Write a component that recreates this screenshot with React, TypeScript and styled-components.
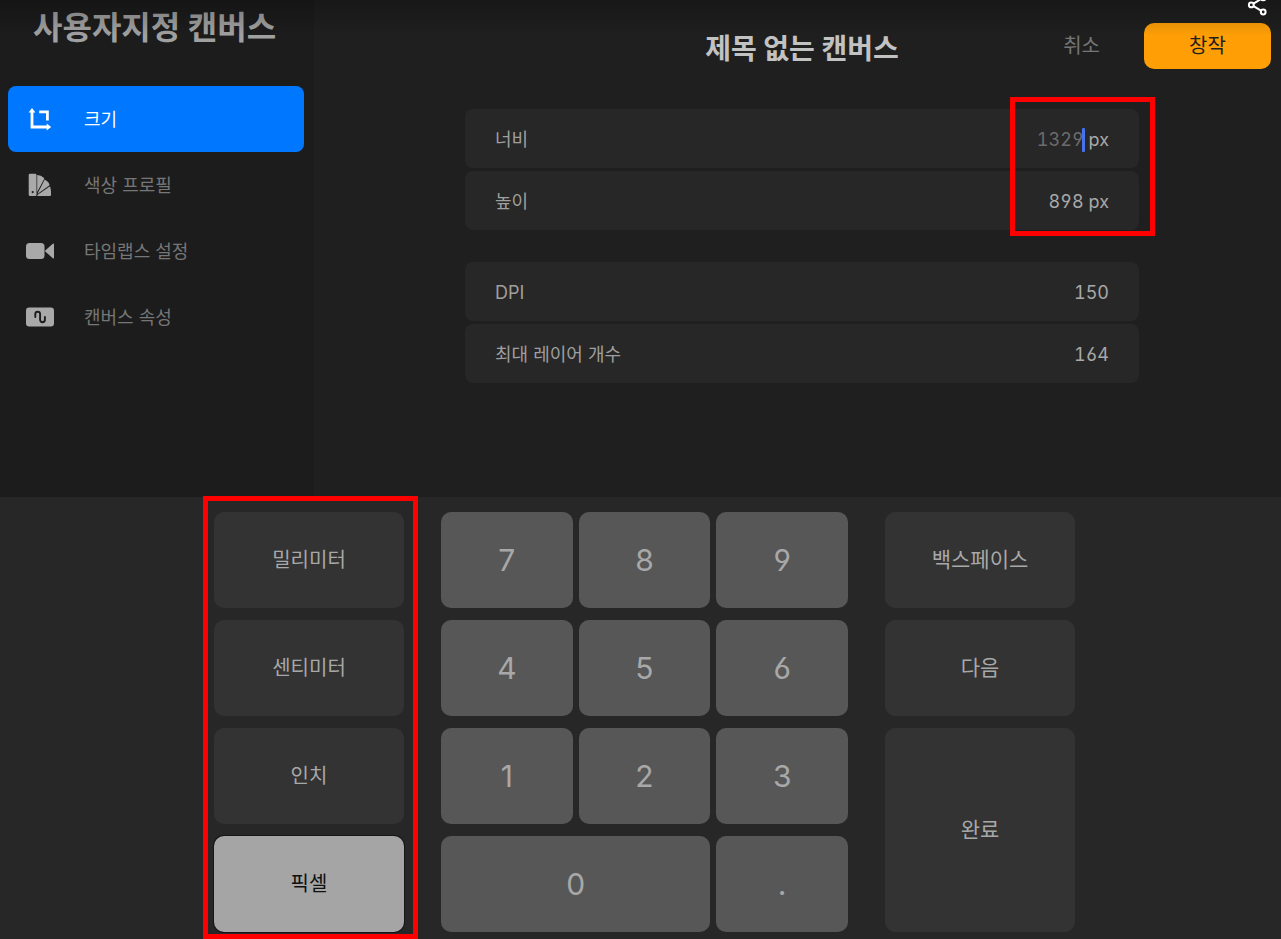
import React, { useState } from "react";
import styled, { createGlobalStyle, css } from "styled-components";

const GlobalStyle = createGlobalStyle`
  *, *::before, *::after { box-sizing: border-box; }
  body {
    margin: 0;
    background: #272727;
    color: #a3a3a3;
    font-family: Inter, "Noto Sans CJK KR", sans-serif;
    font-size: 18px;
    line-height: 24px;
  }
  button, input { font: inherit; color: inherit; border: 0; margin: 0; padding: 0; background: none; }
  button { cursor: pointer; }
  h1, h2, ul { margin: 0; padding: 0; }
  ul { list-style: none; }
`;

const Page = styled.div`
  position: relative;
  display: flex;
  flex-direction: column;
  min-height: 100vh;
  overflow: hidden;
`;

const TopShade = styled.div`
  position: absolute;
  inset: 0 0 auto;
  height: 36px;
  background: linear-gradient(rgba(0, 0, 0, 0.25), rgba(0, 0, 0, 0));
  pointer-events: none;
`;

const Settings = styled.div`
  display: grid;
  grid-template-columns: 314px 1fr;
  min-height: 497px;
`;

const Sidebar = styled.aside`
  padding: 8px 10px 0 8px;
  background: #1c1c1c;
`;

const SidebarTitle = styled.h1`
  padding: 0 0 0 25px;
  margin-bottom: 38px;
  color: #a0a0a0;
  font-size: 32px;
  line-height: 40px;
  font-weight: 700;
`;

const NavItem = styled.button<{ $active: boolean }>`
  display: flex;
  align-items: center;
  gap: 30px;
  width: 100%;
  height: 66px;
  padding: 0 18px;
  border-radius: 8px;
  text-align: left;
  color: #767676;
  svg { color: #a9a9a9; flex: none; }
  ${(p) =>
    p.$active &&
    css`
      background: #0077ff;
      color: #fff;
      svg { color: #fff; }
    `}
`;

const NavLabel = styled.span`
  padding-top: 2px;
`;

const Main = styled.main`
  position: relative;
  padding: 23px 10px 0 19px;
  background: #1f1f1f;
`;

const Header = styled.header`
  display: grid;
  grid-template-columns: 1fr auto 1fr;
  align-items: center;
  margin-bottom: 40px;
`;

const CanvasTitle = styled.h2`
  grid-column: 2;
  padding-top: 6px;
  color: #c2c2c2;
  font-size: 28px;
  line-height: 40px;
  font-weight: 700;
`;

const Actions = styled.div`
  display: flex;
  justify-content: flex-end;
  align-items: center;
  gap: 44px;
`;

const CancelButton = styled.button`
  color: #767676;
  font-size: 20px;
`;

const CreateButton = styled.button`
  width: 127px;
  height: 46px;
  border-radius: 10px;
  background: #ff9f05;
  color: #1f1f1f;
  font-size: 20px;
`;

const ShareButton = styled.button`
  position: absolute;
  top: -6px;
  right: 12px;
  width: 22px;
  height: 22px;
  color: #fff;
  svg { display: block; }
`;

const Form = styled.form`
  display: flex;
  flex-direction: column;
  gap: 32px;
  max-width: 674px;
  margin: 0 auto;
`;

const FieldGroup = styled.div`
  position: relative;
  display: flex;
  flex-direction: column;
  gap: 3px;
`;

const Field = styled.div`
  display: flex;
  align-items: center;
  height: 59px;
  padding: 2px 30px 0;
  border-radius: 8px;
  background: #272727;
`;

const FieldLabel = styled.label`
  flex: 1;
  color: #9f9f9f;
`;

const FieldInput = styled.input<{ $dim?: boolean }>`
  width: 80px;
  text-align: right;
  outline: 0;
  font-feature-settings: "tnum", "cv03", "cv04";
  color: ${(p) => (p.$dim ? "#6c6c6c" : "#a8a8a8")};
`;

const Unit = styled.span`
  padding-left: 5px;
  color: #a8a8a8;
`;

const InputWrap = styled.span`
  position: relative;
  display: flex;
`;

const Caret = styled.span`
  position: absolute;
  top: 0;
  right: -1px;
  width: 3px;
  height: 24px;
  border-radius: 1px;
  background: #4672f0;
`;

const Marker = styled.div`
  position: absolute;
  border: 5px solid #fe0000;
  pointer-events: none;
`;

const FieldMarker = styled(Marker)`
  inset: -12px -16px -6px auto;
  width: 145px;
`;

const UnitMarker = styled(Marker)`
  inset: -16px -14px -7px -11px;
`;

const Keypad = styled.section`
  flex: 1;
  display: grid;
  grid-template-columns: 190px 407px 190px;
  justify-content: center;
  column-gap: 37px;
  padding: 15px 0 7px 8px;
  min-height: 442px;
`;

const KeyColumn = styled.div<{ $columns?: number }>`
  position: relative;
  display: grid;
  grid-template-columns: repeat(${(p) => p.$columns ?? 1}, 1fr);
  grid-template-rows: repeat(4, 1fr);
  gap: 12px 6px;
`;

const Key = styled.button<{ $tall?: boolean }>`
  border-radius: 10px;
  background: #333;
  color: #a8a8a8;
  font-size: 21px;
  ${(p) => p.$tall && "grid-row: span 2;"}
`;

const DigitKey = styled(Key)<{ $wide?: boolean }>`
  background: #575757;
  font-size: 30px;
  font-feature-settings: "cv03", "cv04";
  ${(p) => p.$wide && "grid-column: span 2;"}
`;

const UnitKey = styled(Key)`
  font-size: 20px;
  &[aria-pressed="true"] {
    background: #a5a5a5;
    color: #111;
    box-shadow: 0 0 0 1px #161616;
  }
`;

const SizeIcon = () => (
  <svg width="28" height="28" viewBox="0 0 28 28" fill="none" stroke="currentColor" strokeWidth="2.8" aria-hidden="true">
    <path d="M6 6v16h16M13.2 6.8h8.2v8.6" />
    <path d="M6 3 9.4 7.4H2.6zM25.2 22l-4.5 3.4v-6.8z" fill="currentColor" stroke="none" />
  </svg>
);

const SwatchIcon = () => (
  <svg width="28" height="28" viewBox="0 0 28 28" fill="currentColor" aria-hidden="true">
    <path
      fillRule="evenodd"
      d="M4 2.7h5.2a1.3 1.3 0 0 1 1.3 1.3v19.7a1.3 1.3 0 0 1-1.3 1.3H4a1.3 1.3 0 0 1-1.3-1.3V4A1.3 1.3 0 0 1 4 2.7zM6.7 20a1.1 1.1 0 1 0 0 2.2 1.1 1.1 0 0 0 0-2.2z"
    />
    <path d="M11.2 4q3.9.3 6.6 2.7.7.7.2 1.6L11.2 21z" />
    <path d="M18.7 8.4q3.3 1.7 4.7 4.8.3.9-.5 1.5L11.4 23z" />
    <path d="M24 15.2q1.3 3.6 1.1 8.5-.1 1.3-1.4 1.3H11.4v-1z" />
  </svg>
);

const VideoIcon = () => (
  <svg width="28" height="28" viewBox="0 0 28 28" fill="currentColor" aria-hidden="true">
    <rect x="0" y="6" width="18.5" height="16" rx="3.5" />
    <path d="M19.5 13.3 26.8 6.8q1.2-.8 1.2.5v13.4q0 1.3-1.2.5L19.5 14.7q-.8-.7 0-1.4z" />
  </svg>
);

const CanvasIcon = () => (
  <svg width="28" height="28" viewBox="0 0 28 28" fill="none" aria-hidden="true">
    <rect x="0" y="4.5" width="28" height="19" rx="3.2" fill="currentColor" />
    <path
      d="M9.3 14v-2.8a2.4 2.4 0 0 1 4.8 0v5.6a2.4 2.4 0 0 0 4.8 0V14"
      stroke="#1c1c1c"
      strokeWidth="1.9"
      strokeLinecap="round"
    />
  </svg>
);

const ShareIcon = () => (
  <svg width="22" height="22" viewBox="0 0 22 22" fill="none" stroke="currentColor" strokeWidth="2" aria-hidden="true">
    <path d="M6.5 9.6 14 5M6.5 12.2 14 16.6" />
    <circle cx="4.3" cy="10.9" r="2.4" />
    <circle cx="16.2" cy="18" r="2.4" />
    <circle cx="16.2" cy="3.8" r="2.4" />
  </svg>
);

const sections = [
  { label: "크기", Icon: SizeIcon },
  { label: "색상 프로필", Icon: SwatchIcon },
  { label: "타임랩스 설정", Icon: VideoIcon },
  { label: "캔버스 속성", Icon: CanvasIcon },
];

const units = ["밀리미터", "센티미터", "인치", "픽셀"];
const digits = ["7", "8", "9", "4", "5", "6", "1", "2", "3"];

export default function App() {
  const [section, setSection] = useState("크기");
  const [unit, setUnit] = useState("픽셀");

  return (
    <>
      <GlobalStyle />
      <Page>
        <Settings>
          <Sidebar>
            <SidebarTitle>사용자지정 캔버스</SidebarTitle>
            <nav>
              <ul>
                {sections.map(({ label, Icon }) => (
                  <li key={label}>
                    <NavItem type="button" $active={label === section} onClick={() => setSection(label)}>
                      <Icon />
                      <NavLabel>{label}</NavLabel>
                    </NavItem>
                  </li>
                ))}
              </ul>
            </nav>
          </Sidebar>
          <Main>
            <Header>
              <CanvasTitle>제목 없는 캔버스</CanvasTitle>
              <Actions>
                <CancelButton type="button">취소</CancelButton>
                <CreateButton type="submit" form="canvas-form">창작</CreateButton>
              </Actions>
            </Header>
            <Form id="canvas-form" onSubmit={(e) => e.preventDefault()}>
              <FieldGroup>
                <Field>
                  <FieldLabel htmlFor="width">너비</FieldLabel>
                  <InputWrap>
                    <FieldInput id="width" inputMode="numeric" defaultValue="1329" $dim />
                    <Caret />
                  </InputWrap>
                  <Unit>px</Unit>
                </Field>
                <Field>
                  <FieldLabel htmlFor="height">높이</FieldLabel>
                  <FieldInput id="height" inputMode="numeric" defaultValue="898" />
                  <Unit>px</Unit>
                </Field>
                <FieldMarker />
              </FieldGroup>
              <FieldGroup>
                <Field>
                  <FieldLabel htmlFor="dpi">DPI</FieldLabel>
                  <FieldInput id="dpi" inputMode="numeric" defaultValue="150" />
                </Field>
                <Field>
                  <FieldLabel htmlFor="layers">최대 레이어 개수</FieldLabel>
                  <FieldInput id="layers" readOnly value="164" />
                </Field>
              </FieldGroup>
            </Form>
          </Main>
        </Settings>
        <Keypad>
          <KeyColumn>
            {units.map((name) => (
              <UnitKey key={name} type="button" aria-pressed={name === unit} onClick={() => setUnit(name)}>
                {name}
              </UnitKey>
            ))}
            <UnitMarker />
          </KeyColumn>
          <KeyColumn $columns={3}>
            {digits.map((d) => (
              <DigitKey key={d} type="button">{d}</DigitKey>
            ))}
            <DigitKey type="button" $wide>0</DigitKey>
            <DigitKey type="button">.</DigitKey>
          </KeyColumn>
          <KeyColumn>
            <Key type="button">백스페이스</Key>
            <Key type="button">다음</Key>
            <Key type="button" $tall>완료</Key>
          </KeyColumn>
        </Keypad>
        <TopShade />
        <ShareButton type="button" aria-label="공유">
          <ShareIcon />
        </ShareButton>
      </Page>
    </>
  );
}
